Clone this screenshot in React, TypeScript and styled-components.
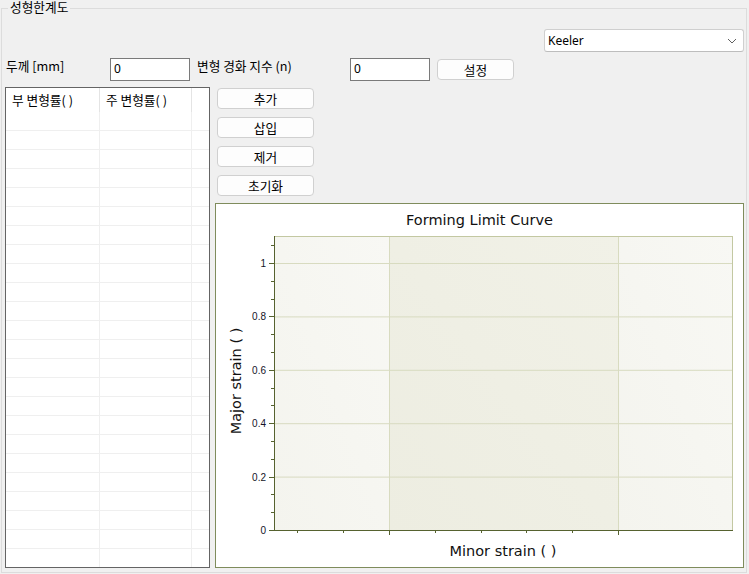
import styled, { createGlobalStyle } from 'styled-components'

const GlobalStyle = createGlobalStyle`
  html, body {
    margin: 0;
    padding: 0;
    background: #f0f0f0;
  }
  body {
    font-family: "Noto Sans CJK KR", "Noto Sans", sans-serif;
    font-size: 12.7px;
    color: #000;
    overflow: hidden;
  }
`

const GroupBox = styled.fieldset`
  box-sizing: border-box;
  width: 746px;
  height: 573px;
  margin: 0 0 0 1px;
  padding: 0 2px 4px 3px;
  border: 1px solid #dcdcdc;
  min-width: 0;
`

const Legend = styled.legend`
  margin-left: 3px;
  padding: 0 2px;
  font-family: "Liberation Sans", "Noto Sans CJK KR", sans-serif;
  font-size: 12.7px;
  line-height: 16px;
  color: #000;
`

const Body = styled.div`
  height: 552px;
  display: flex;
  flex-direction: column;
`

const SelectRow = styled.div`
  display: flex;
  justify-content: flex-end;
  margin-top: 13px;
`

const Combo = styled.div`
  box-sizing: border-box;
  width: 200px;
  height: 23px;
  display: flex;
  align-items: center;
  justify-content: space-between;
  padding: 0 6px 0 3px;
  background: #fff;
  border: 1px solid #cfcfcf;
  border-bottom-color: #bdbdbd;
  border-radius: 3px;
  font-family: "Noto Sans", "Liberation Sans", sans-serif;
  font-size: 12px;
`

const ParamRow = styled.div`
  display: flex;
  align-items: flex-start;
  margin-top: 6px;
  height: 23px;
`

const Label = styled.span<{ $width: number; $indent?: number }>`
  box-sizing: border-box;
  width: ${(p) => p.$width}px;
  padding-left: ${(p) => p.$indent ?? 0}px;
  line-height: 16px;
  white-space: nowrap;
`

const NumberBox = styled.div`
  box-sizing: border-box;
  width: 80px;
  height: 23px;
  padding: 2px 3px;
  background: #fff;
  border: 1px solid #7a7a7a;
  line-height: 16px;
  font-family: "Noto Sans", "Liberation Sans", sans-serif;
  font-size: 12px;
`

const PushButton = styled.button<{ $width: number }>`
  box-sizing: border-box;
  width: ${(p) => p.$width}px;
  height: 21px;
  padding: 0;
  background: #fdfdfd;
  border: 1px solid #d0d0d0;
  border-radius: 4px;
  font-family: "Noto Sans CJK KR", "Noto Sans", sans-serif;
  font-size: 12.7px;
  line-height: 19px;
  color: #000;
`

const SetButton = styled(PushButton)`
  margin: 1px 0 0 7px;
`

const Main = styled.div`
  flex: 1;
  display: flex;
  gap: 5px;
  margin-top: 6px;
  min-height: 0;
`

const Grid = styled.div`
  box-sizing: border-box;
  width: 205px;
  border: 1px solid #646464;
  background: #fff;
  overflow: hidden;
`

const GridRow = styled.div<{ $header?: boolean }>`
  display: grid;
  grid-template-columns: 94px 92px 1fr;
  height: ${(p) => (p.$header ? 24 : 19)}px;
`

const Cell = styled.div<{ $header?: boolean; $last?: boolean }>`
  box-sizing: border-box;
  padding-left: 6px;
  line-height: 24px;
  white-space: nowrap;
  border-right: ${(p) => (p.$last ? 'none' : `1px solid ${p.$header ? '#e4e4e4' : '#efefef'}`)};
  border-bottom: ${(p) => (p.$header ? 'none' : '1px solid #efefef')};
`

const Side = styled.div`
  flex: 1;
  display: flex;
  flex-direction: column;
  gap: 8px;
`

const ActionButton = styled(PushButton)`
  margin-left: 2px;
  &:first-child {
    margin-top: 1px;
  }
`

const Chart = styled.div`
  flex: 1;
  margin-top: -1px;
  display: flex;
  flex-direction: column;
  background: #fff;
  border: 1px solid #7f8c5c;
`

const ChartTitle = styled.div`
  height: 32px;
  line-height: 32px;
  text-align: center;
  font-family: "DejaVu Sans", Verdana, sans-serif;
  font-size: 14.5px;
  color: #111;
`

const Plot = styled.svg`
  display: block;
  font-family: "Liberation Sans", Arial, sans-serif;
`

const AxisTitle = styled.text`
  font-family: "DejaVu Sans", Verdana, sans-serif;
  font-size: 14.5px;
  fill: #111;
`

const X0 = 58
const X1 = 517
const Y0 = 294
const PER = 267
const MAJOR_X = [173, 402]
const STEP_X = 45.8

const yOf = (v: number) => Y0 - v * PER

const yTicks = Array.from({ length: 17 }, (_, k) => ({ y: Y0 - k * 17.8, major: k % 3 === 0 }))
const xTicks: { x: number; major: boolean }[] = []
for (let k = -3; k <= 5; k++) {
  const x = MAJOR_X[0] + k * STEP_X
  if (x > X0 && x < X1) xTicks.push({ x, major: k === 0 || k === 5 })
}
const yLabels = [
  { v: 1, t: '1' },
  { v: 0.8, t: '0.8' },
  { v: 0.6, t: '0.6' },
  { v: 0.4, t: '0.4' },
  { v: 0.2, t: '0.2' },
  { v: 0, t: '0' },
]

function FormingLimitChart() {
  return (
    <Chart>
      <ChartTitle>Forming Limit Curve</ChartTitle>
      <Plot width="527" height="331" viewBox="0 0 527 331">
        <defs>
          <linearGradient id="side" x1="0" y1="1" x2="1" y2="0">
            <stop offset="0" stopColor="#f4f4ee" />
            <stop offset="1" stopColor="#f8f8f4" />
          </linearGradient>
          <linearGradient id="mid" x1="0" y1="1" x2="1" y2="0">
            <stop offset="0" stopColor="#edede1" />
            <stop offset="1" stopColor="#f1f1e7" />
          </linearGradient>
        </defs>
        <rect x={X0} y={0} width={MAJOR_X[0] - X0} height={Y0} fill="url(#side)" />
        <rect x={MAJOR_X[0]} y={0} width={MAJOR_X[1] - MAJOR_X[0]} height={Y0} fill="url(#mid)" />
        <rect x={MAJOR_X[1]} y={0} width={X1 - MAJOR_X[1]} height={Y0} fill="url(#side)" />
        {yLabels.slice(0, 5).map((l) => (
          <line key={l.t} x1={X0} x2={X1} y1={yOf(l.v) + 0.5} y2={yOf(l.v) + 0.5} stroke="#d8dbc0" />
        ))}
        {MAJOR_X.map((x) => (
          <line key={x} x1={x + 0.5} x2={x + 0.5} y1={0} y2={Y0} stroke="#d8dbc0" />
        ))}
        <line x1={X0} x2={X1} y1={0.5} y2={0.5} stroke="#c3c8a2" />
        <line x1={X1 - 0.5} x2={X1 - 0.5} y1={0} y2={Y0} stroke="#c3c8a2" />
        <line x1={X0 + 0.5} x2={X0 + 0.5} y1={0} y2={Y0 + 0.5} stroke="#56622f" />
        <line x1={X0} x2={X1} y1={Y0 + 0.5} y2={Y0 + 0.5} stroke="#56622f" />
        {yTicks.map((t) => (
          <line
            key={t.y}
            x1={X0 - (t.major ? 5 : 3)}
            x2={X0}
            y1={Math.round(t.y) + 0.5}
            y2={Math.round(t.y) + 0.5}
            stroke="#56622f"
          />
        ))}
        {xTicks.map((t) => (
          <line
            key={t.x}
            x1={Math.round(t.x) + 0.5}
            x2={Math.round(t.x) + 0.5}
            y1={Y0}
            y2={Y0 + (t.major ? 5 : 3)}
            stroke="#56622f"
          />
        ))}
        {yLabels.map((l) => (
          <text key={l.t} x={50} y={yOf(l.v) + 4} textAnchor="end" fontSize="10" fill="#141428">
            {l.t}
          </text>
        ))}
        <AxisTitle transform="translate(25 145) rotate(-90)" textAnchor="middle">
          Major strain ( )
        </AxisTitle>
        <AxisTitle x={287} y={320} textAnchor="middle">
          Minor strain ( )
        </AxisTitle>
      </Plot>
    </Chart>
  )
}

function StrainGrid() {
  return (
    <Grid>
      <GridRow $header>
        <Cell $header>부 변형률( )</Cell>
        <Cell $header>주 변형률( )</Cell>
        <Cell $header $last />
      </GridRow>
      {Array.from({ length: 24 }, (_, i) => (
        <GridRow key={i}>
          <Cell />
          <Cell />
          <Cell $last />
        </GridRow>
      ))}
    </Grid>
  )
}

export default function App() {
  return (
    <>
      <GlobalStyle />
      <GroupBox>
        <Legend>성형한계도</Legend>
        <Body>
          <SelectRow>
            <Combo>
              <span>Keeler</span>
              <svg width="10" height="6" viewBox="0 0 10 6">
                <polyline points="1,1 5,5 9,1" fill="none" stroke="#606060" strokeWidth="1" />
              </svg>
            </Combo>
          </SelectRow>
          <ParamRow>
            <Label $width={105} $indent={1}>
              두께 [mm]
            </Label>
            <NumberBox>0</NumberBox>
            <Label $width={160} $indent={7}>
              변형 경화 지수 (n)
            </Label>
            <NumberBox>0</NumberBox>
            <SetButton $width={77}>설정</SetButton>
          </ParamRow>
          <Main>
            <StrainGrid />
            <Side>
              <ActionButton $width={97}>추가</ActionButton>
              <ActionButton $width={97}>삽입</ActionButton>
              <ActionButton $width={97}>제거</ActionButton>
              <ActionButton $width={97}>초기화</ActionButton>
              <FormingLimitChart />
            </Side>
          </Main>
        </Body>
      </GroupBox>
    </>
  )
}
